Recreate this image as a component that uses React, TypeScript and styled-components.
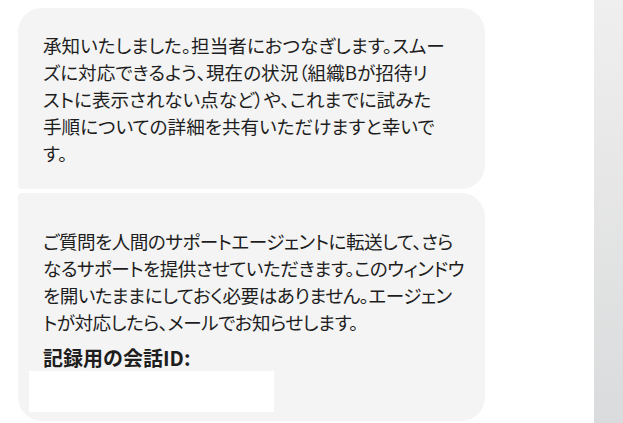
import styled, { createGlobalStyle } from 'styled-components';

const GlobalStyle = createGlobalStyle`
  html, body {
    margin: 0;
    padding: 0;
    background: #fff;
  }
  body {
    font-family: "Noto Sans CJK JP", "Noto Sans", sans-serif;
    color: #1e1e1e;
  }
`;

const Screen = styled.div`
  display: flex;
  width: 623px;
  height: 423px;
  overflow: hidden;
`;

const Thread = styled.div`
  flex: 0 0 594px;
  display: flex;
  flex-direction: column;
  gap: 4px;
  padding: 8px 0 0 18px;
  box-sizing: border-box;
`;

const SidePanel = styled.div`
  flex: 1;
  background: linear-gradient(to bottom, #efefef, #dadbdc);
`;

const Bubble = styled.div<{ $first?: boolean; $last?: boolean }>`
  width: 467px;
  box-sizing: border-box;
  background: #f4f4f4;
  padding: 23px 25px ${(p) => (p.$last ? '9px' : '23px')};
  border-radius: ${(p) => (p.$first ? '24px' : '4px')} 24px 24px
    ${(p) => (p.$last ? '24px' : '4px')};
  font-size: 18.6px;
  line-height: 27px;
  font-feature-settings: "palt";
`;

const Paragraph = styled.p<{ $top?: number; $tight?: boolean }>`
  margin: ${(p) => p.$top ?? 0}px 0 0;
  white-space: nowrap;
  letter-spacing: ${(p) => (p.$tight ? '-0.5px' : '0')};
`;

const Label = styled.div`
  margin-top: 8px;
  font-size: 20px;
  line-height: 29px;
  font-weight: 700;
  font-feature-settings: normal;
`;

const Redacted = styled.div`
  margin: -1px 0 0 -14px;
  width: 245px;
  height: 41px;
  background: #fff;
`;

const App = () => {
  return (
    <>
      <GlobalStyle />
      <Screen>
        <Thread>
          <Bubble $first>
            <Paragraph>
              承知いたしました。担当者におつなぎします。スムー
              <br />
              ズに対応できるよう、現在の状況（組織Bが招待リ
              <br />
              ストに表示されない点など）や、これまでに試みた
              <br />
              手順についての詳細を共有いただけますと幸いで
              <br />す。
            </Paragraph>
          </Bubble>
          <Bubble $last>
            <Paragraph $top={11} $tight>
              ご質問を人間のサポートエージェントに転送して、さら
              <br />
              なるサポートを提供させていただきます。このウィンドウ
              <br />
              を開いたままにしておく必要はありません。エージェン
              <br />
              トが対応したら、メールでお知らせします。
            </Paragraph>
            <Label>記録用の会話ID:</Label>
            <Redacted />
          </Bubble>
        </Thread>
        <SidePanel />
      </Screen>
    </>
  );
};

export default App;
